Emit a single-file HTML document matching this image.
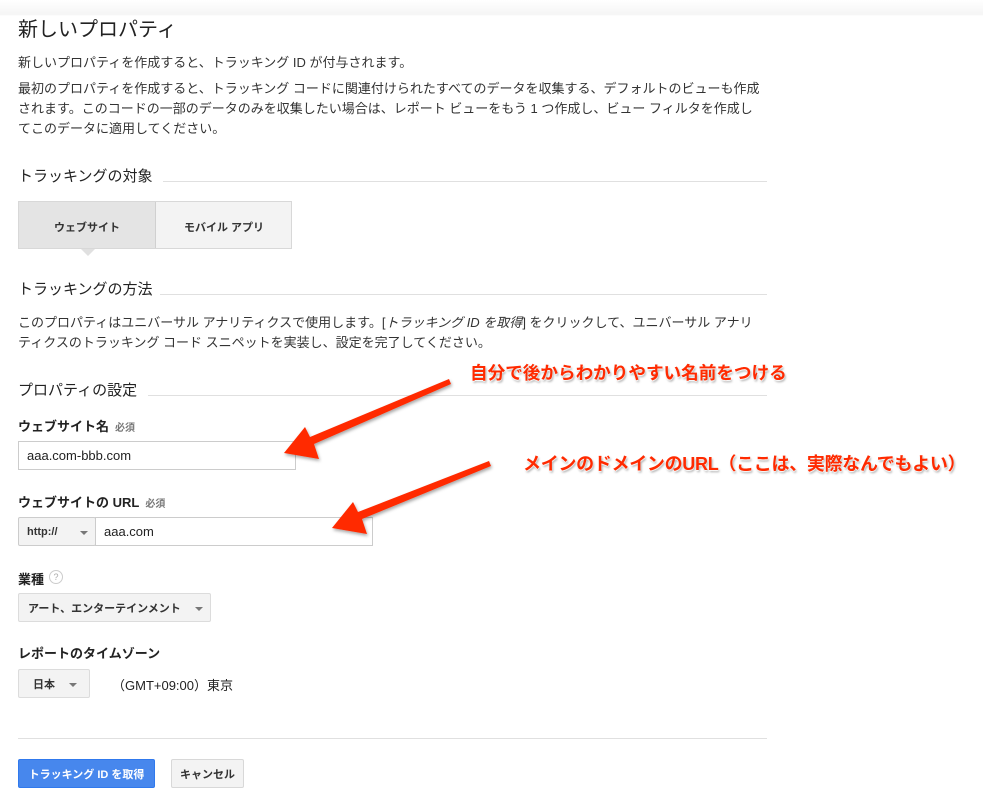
<!DOCTYPE html>
<html><head><meta charset="utf-8"><style>
body{margin:0;width:983px;height:804px;background:#fff;font-family:"Liberation Sans","Noto Sans CJK JP",sans-serif;color:#333;position:relative;overflow:hidden}
.a{position:absolute;white-space:nowrap}
.t13{font-size:13px}
.sec{font-size:15px;color:#222}
.rule{position:absolute;height:1px;background:#e0e0e0}
.lbl{font-size:13px;font-weight:bold;color:#222}
.req{font-size:10px;color:#777;font-weight:bold;margin-left:6px}
.box{position:absolute;box-sizing:border-box;border:1px solid #ccc;background:#fff}
.sel{position:absolute;box-sizing:border-box;border:1px solid #dcdcdc;background:#f3f3f3;border-radius:2px;font-size:11px;font-weight:bold;color:#333;display:flex;align-items:center}
.car{position:absolute;width:0;height:0;border-left:4px solid transparent;border-right:4px solid transparent;border-top:4px solid #777}
.ann{position:absolute;white-space:nowrap;font-weight:bold;color:#ff2a00;text-shadow:0 1px 1px #fff,1px 2px 2px rgba(0,0,0,.35)}
.btn{position:absolute;top:759px;height:29px;box-sizing:border-box;border-radius:2px;font-size:11px;font-weight:bold;display:flex;align-items:center;justify-content:center}
</style></head><body>
<div style="position:absolute;left:0;top:0;width:983px;height:16px;background:linear-gradient(#fff,#f5f5f5 90%,#fff)"></div>
<div class="a" style="left:18px;top:13px;font-size:20px;color:#222">新しいプロパティ</div>
<div class="a t13" style="left:18px;top:52px">新しいプロパティを作成すると、トラッキング ID が付与されます。</div>
<div class="a t13" style="left:18px;top:79px;line-height:20px">最初のプロパティを作成すると、トラッキング コードに関連付けられたすべてのデータを収集する、デフォルトのビューも作成<br>されます。このコードの一部のデータのみを収集したい場合は、レポート ビューをもう 1 つ作成し、ビュー フィルタを作成し<br>てこのデータに適用してください。</div>
<div class="a sec" style="left:18px;top:165px">トラッキングの対象</div>
<div class="rule" style="left:163px;top:181px;width:604px"></div>
<div style="position:absolute;left:18px;top:201px;width:274px;height:48px;box-sizing:border-box;border:1px solid #d8d8d8;background:#f3f3f3"></div>
<div style="position:absolute;left:19px;top:202px;width:136px;height:46px;background:#e4e4e4;border-right:1px solid #d0d0d0"></div>
<div class="a" style="left:19px;top:219px;width:136px;text-align:center;font-size:11px;font-weight:bold">ウェブサイト</div>
<div class="a" style="left:156px;top:219px;width:136px;text-align:center;font-size:11px;font-weight:bold">モバイル アプリ</div>
<div style="position:absolute;left:81px;top:249px;width:0;height:0;border-left:7px solid transparent;border-right:7px solid transparent;border-top:7px solid #e0e0e0"></div>
<div class="a sec" style="left:18px;top:278px">トラッキングの方法</div>
<div class="rule" style="left:160px;top:294px;width:607px"></div>
<div class="a t13" style="left:18px;top:313px;line-height:20px">このプロパティはユニバーサル アナリティクスで使用します。[<i>トラッキング ID を取得</i>] をクリックして、ユニバーサル アナリ<br>ティクスのトラッキング コード スニペットを実装し、設定を完了してください。</div>
<div class="a sec" style="left:18px;top:379px">プロパティの設定</div>
<div class="rule" style="left:148px;top:395px;width:619px"></div>
<div class="a lbl" style="left:18px;top:416px">ウェブサイト名<span class="req">必須</span></div>
<div class="box" style="left:18px;top:441px;width:278px;height:29px"></div>
<div class="a t13" style="left:27px;top:448px;color:#222">aaa.com-bbb.com</div>
<div class="a lbl" style="left:18px;top:492px">ウェブサイトの URL<span class="req">必須</span></div>
<div class="sel" style="left:18px;top:517px;width:78px;height:29px;border-color:#ccc;padding-left:8px">http://<div class="car" style="left:61px;top:13px"></div></div>
<div class="box" style="left:95px;top:517px;width:278px;height:29px"></div>
<div class="a t13" style="left:104px;top:524px;color:#222">aaa.com</div>
<div class="a lbl" style="left:18px;top:569px">業種</div>
<div style="position:absolute;left:49px;top:570px;width:12px;height:12px;border:1px solid #ccc;border-radius:50%;font-size:9px;color:#aaa;text-align:center;line-height:12px">?</div>
<div class="sel" style="left:18px;top:593px;width:193px;height:29px;padding-left:9px">アート、エンターテインメント<div class="car" style="left:176px;top:13px"></div></div>
<div class="a lbl" style="left:18px;top:643px">レポートのタイムゾーン</div>
<div class="sel" style="left:18px;top:669px;width:72px;height:29px;padding-left:14px">日本<div class="car" style="left:50px;top:13px"></div></div>
<div class="a t13" style="left:112px;top:675px;color:#222">（GMT+09:00）東京</div>
<div class="rule" style="left:18px;top:738px;width:749px"></div>
<div class="btn" style="left:18px;width:137px;background:#4787ed;border:1px solid #3079ed;color:#fff">トラッキング ID を取得</div>
<div class="btn" style="left:171px;width:73px;background:#f3f3f3;border:1px solid #d8d8d8;color:#333">キャンセル</div>
<svg style="position:absolute;left:0;top:0" width="983" height="804">
<defs><filter id="s"><feDropShadow dx="1" dy="2" stdDeviation="1.5" flood-opacity=".35"/></filter></defs>
<polygon filter="url(#s)" fill="#ff2a00" points="449,379 451,384 314,444 319,459 284,453 305,427 310,437"/>
<polygon filter="url(#s)" fill="#ff2a00" points="489,461 491,466 362,519 367,534 332,528 353,502 358,512"/>
</svg>
<div class="ann" style="left:470px;top:360px;font-size:17.6px">自分で後からわかりやすい名前をつける</div>
<div class="ann" style="left:523px;top:450px;font-size:18px;letter-spacing:-0.3px">メインのドメインのURL（ここは、実際なんでもよい）</div>
</body></html>
